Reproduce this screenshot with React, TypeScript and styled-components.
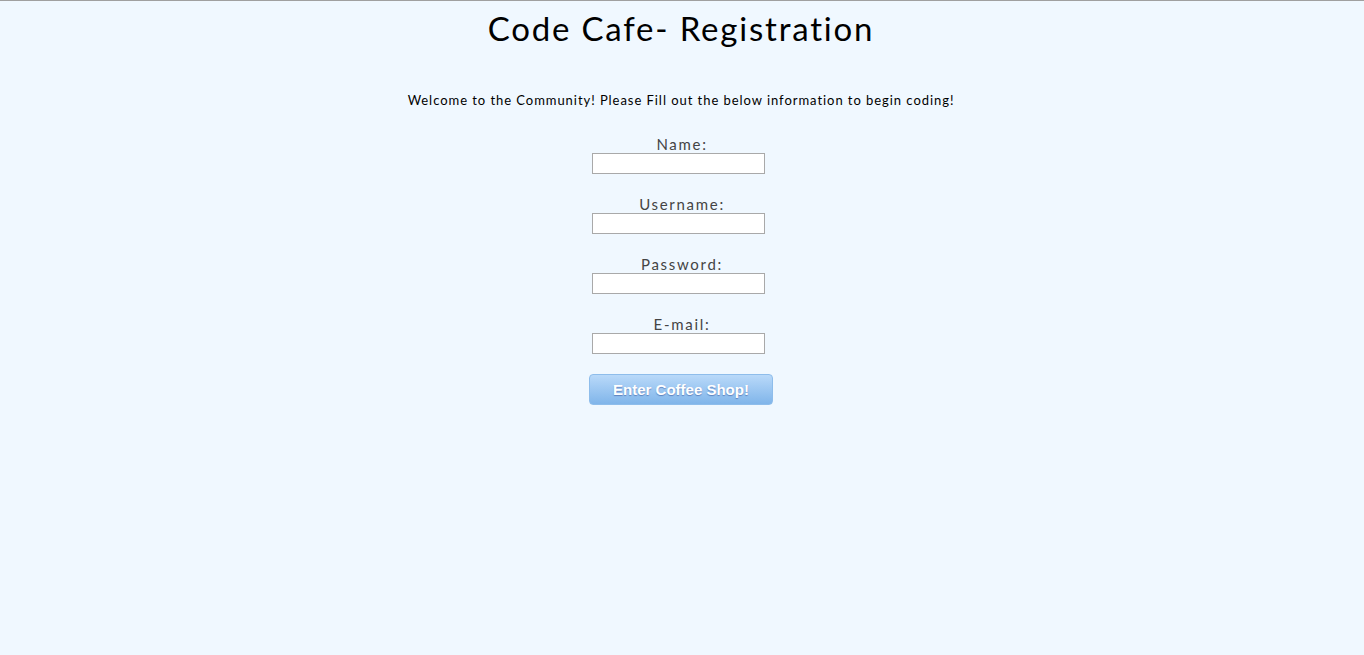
import styled, { createGlobalStyle } from 'styled-components'

const GlobalStyle = createGlobalStyle`
  html, body {
    margin: 0;
    padding: 0;
    background: #f0f8ff;
  }
  body {
    font-family: 'Lato', 'Open Sans', sans-serif;
    border-top: 1px solid #a0a0a0;
    min-height: 654px;
  }
`

const Page = styled.div`
  display: flex;
  flex-direction: column;
  align-items: center;
  padding-right: 2px;
`

const Title = styled.h1`
  margin: 7px 0 0;
  font-size: 33px;
  font-weight: 400;
  letter-spacing: 1.8px;
  color: #000;
  line-height: 40px;
`

const Intro = styled.p`
  margin: 43px 0 0;
  font-size: 13px;
  line-height: 18px;
  letter-spacing: 0.95px;
  color: #000;
`

const Form = styled.form`
  display: flex;
  flex-direction: column;
  align-items: center;
  margin-top: 26px;
`

const Field = styled.div`
  display: flex;
  flex-direction: column;
  align-items: center;
  height: 60px;
`

const Label = styled.label`
  font-size: 15px;
  line-height: 18px;
  letter-spacing: 1.7px;
  color: #444;
  padding-left: 2px;
`

const Input = styled.input`
  box-sizing: border-box;
  width: 173px;
  height: 21px;
  margin: 0 5px 0 0;
  padding: 1px 2px;
  border: 1px solid #a9a9a9;
  background: #fff;
  outline: none;
`

const Button = styled.button`
  box-sizing: border-box;
  width: 184px;
  height: 31px;
  margin-top: -1px;
  border: 1px solid #8ebdeb;
  border-radius: 4px;
  background: linear-gradient(to bottom, #b9d9f9, #80b5ea);
  color: #fff;
  font-family: 'Liberation Sans', Arial, sans-serif;
  font-size: 15px;
  font-weight: 700;
  text-shadow: 0 1px 1px rgba(60, 90, 160, 0.6);
  cursor: pointer;
`

const fields = [
    { id: 'name', label: 'Name:', type: 'text' },
    { id: 'username', label: 'Username:', type: 'text' },
    { id: 'password', label: 'Password:', type: 'password' },
    { id: 'email', label: 'E-mail:', type: 'email' }
]

export default () => {
    return (
        <>
            <GlobalStyle />
            <Page>
                <Title>Code Cafe- Registration</Title>
                <Intro>Welcome to the Community! Please Fill out the below information to begin coding!</Intro>
                <Form onSubmit={e => e.preventDefault()}>
                    {
                        fields.map(field =>
                            <Field key={field.id}>
                                <Label htmlFor={field.id}>{ field.label }</Label>
                                <Input id={field.id} type={field.type} />
                            </Field>
                        )
                    }
                    <Button type={'submit'}>Enter Coffee Shop!</Button>
                </Form>
            </Page>
        </>
    )
}
